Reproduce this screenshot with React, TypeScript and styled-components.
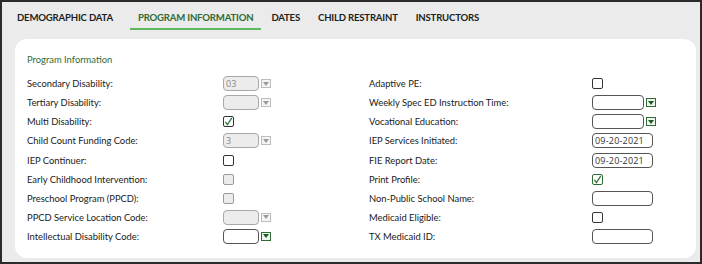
import styled, { createGlobalStyle, css } from 'styled-components'

const GlobalStyle = createGlobalStyle`
    body {
        margin: 0;
        font-family: 'Lato', 'Open Sans', sans-serif;
    }
`

const Frame = styled.div`
    width: 702px;
    height: 264px;
    box-sizing: border-box;
    border: 2px solid #2b2b2b;
    background: #ebebeb;
    display: flex;
    flex-direction: column;
`

const TabBar = styled.div`
    display: flex;
    align-items: center;
    gap: 18px;
    height: 32px;
    padding-left: 15px;
`

const Tab = styled.div<{ $active?: boolean }>`
    position: relative;
    font-size: 9.6px;
    letter-spacing: -0.2px;
    line-height: 14px;
    font-weight: 700;
    color: ${(p) => (p.$active ? '#2f6b35' : '#1e1e1e')};
    ${(p) =>
        p.$active &&
        css`
            margin-left: 7px;
            &::after {
                content: '';
                position: absolute;
                left: -8px;
                right: -8px;
                bottom: -5px;
                height: 2px;
                background: #5cb85c;
            }
        `}
`

const Card = styled.div`
    flex: 1;
    margin: 6px 4px 4px 13px;
    background: #fff;
    border-radius: 12px;
    padding: 14px 12px 12px;
`

const Heading = styled.div`
    font-size: 9.4px;
    line-height: 14px;
    color: #2f6b35;
    margin-bottom: 7px;
`

const Columns = styled.div`
    display: grid;
    grid-template-columns: 342px 1fr;
`

const Column = styled.div`
    display: flex;
    flex-direction: column;
`

const Row = styled.div<{ $labelWidth: number }>`
    display: grid;
    grid-template-columns: ${(p) => p.$labelWidth}px auto;
    align-items: center;
    height: 19.1px;
`

const Label = styled.div`
    font-size: 9.4px;
    color: #1a1a1a;
`

const Control = styled.div`
    display: flex;
    align-items: center;
    gap: 2px;
`

const Box = styled.div<{ $width: number; $disabled?: boolean }>`
    width: ${(p) => p.$width}px;
    height: 15px;
    box-sizing: border-box;
    border: 1px solid ${(p) => (p.$disabled ? '#a8a8a8' : '#555')};
    border-radius: 4px;
    background: ${(p) => (p.$disabled ? '#ececec' : '#fff')};
    font-family: 'Open Sans', sans-serif;
    font-size: 9px;
    line-height: 13px;
    padding-left: 2px;
    color: ${(p) => (p.$disabled ? '#8a8a8a' : '#333')};
    letter-spacing: 0.2px;
    white-space: nowrap;
    overflow: hidden;
`

const Arrow = styled.div<{ $disabled?: boolean }>`
    width: 10px;
    height: 9px;
    box-sizing: border-box;
    border: 1px solid ${(p) => (p.$disabled ? '#bdbdbd' : '#2f6b35')};
    background: ${(p) => (p.$disabled ? '#f4f4f4' : '#eef5ee')};
    display: flex;
    align-items: center;
    justify-content: center;
    &::before {
        content: '';
        border-left: 3px solid transparent;
        border-right: 3px solid transparent;
        border-top: 4px solid ${(p) => (p.$disabled ? '#9a9a9a' : '#1f5a24')};
    }
`

const Check = styled.div<{ $disabled?: boolean; $green?: boolean }>`
    width: 11px;
    height: 11px;
    box-sizing: border-box;
    border: 1px solid
        ${(p) => (p.$green ? '#2f6b35' : p.$disabled ? '#9a9a9a' : '#333')};
    border-radius: 2px;
    background: ${(p) => (p.$disabled ? '#ececec' : '#fff')};
    display: flex;
    align-items: center;
    justify-content: center;
`

type Field =
    | { kind: 'select'; value?: string; disabled?: boolean }
    | { kind: 'check'; checked?: boolean; disabled?: boolean; green?: boolean }
    | { kind: 'text'; value?: string }

type Item = { label: string; field: Field }

const left: Item[] = [
    { label: 'Secondary Disability:', field: { kind: 'select', value: '03', disabled: true } },
    { label: 'Tertiary Disability:', field: { kind: 'select', disabled: true } },
    { label: 'Multi Disability:', field: { kind: 'check', checked: true } },
    { label: 'Child Count Funding Code:', field: { kind: 'select', value: '3', disabled: true } },
    { label: 'IEP Continuer:', field: { kind: 'check' } },
    { label: 'Early Childhood Intervention:', field: { kind: 'check', disabled: true } },
    { label: 'Preschool Program (PPCD):', field: { kind: 'check', disabled: true } },
    { label: 'PPCD Service Location Code:', field: { kind: 'select', disabled: true } },
    { label: 'Intellectual Disability Code:', field: { kind: 'select' } },
]

const right: Item[] = [
    { label: 'Adaptive PE:', field: { kind: 'check' } },
    { label: 'Weekly Spec ED Instruction Time:', field: { kind: 'select' } },
    { label: 'Vocational Education:', field: { kind: 'select' } },
    { label: 'IEP Services Initiated:', field: { kind: 'text', value: '09-20-2021' } },
    { label: 'FIE Report Date:', field: { kind: 'text', value: '09-20-2021' } },
    { label: 'Print Profile:', field: { kind: 'check', checked: true, green: true } },
    { label: 'Non-Public School Name:', field: { kind: 'text' } },
    { label: 'Medicaid Eligible:', field: { kind: 'check' } },
    { label: 'TX Medicaid ID:', field: { kind: 'text' } },
]

function Tick() {
    return (
        <svg width="9" height="9" viewBox="0 0 9 9">
            <path d="M1.4 4.8 L3.5 7.6 L7.8 0.8" fill="none" stroke="#2f7a35" strokeWidth="1.3" />
        </svg>
    )
}

function FieldControl({ field, selectWidth }: { field: Field; selectWidth: number }) {
    if (field.kind === 'check') {
        return (
            <Control>
                <Check $disabled={field.disabled} $green={field.green}>
                    {field.checked && <Tick />}
                </Check>
            </Control>
        )
    }
    if (field.kind === 'text') {
        return (
            <Control>
                <Box $width={61}>{field.value}</Box>
            </Control>
        )
    }
    return (
        <Control>
            <Box $width={selectWidth} $disabled={field.disabled}>
                {field.value}
            </Box>
            <Arrow $disabled={field.disabled} />
        </Control>
    )
}

function App() {
    return (
        <Frame>
            <GlobalStyle />
            <TabBar>
                <Tab>DEMOGRAPHIC DATA</Tab>
                <Tab $active>PROGRAM INFORMATION</Tab>
                <Tab>DATES</Tab>
                <Tab>CHILD RESTRAINT</Tab>
                <Tab>INSTRUCTORS</Tab>
            </TabBar>
            <Card>
                <Heading>Program Information</Heading>
                <Columns>
                    <Column>
                        {left.map((item) => (
                            <Row key={item.label} $labelWidth={196}>
                                <Label>{item.label}</Label>
                                <FieldControl field={item.field} selectWidth={36} />
                            </Row>
                        ))}
                    </Column>
                    <Column>
                        {right.map((item) => (
                            <Row key={item.label} $labelWidth={223}>
                                <Label>{item.label}</Label>
                                <FieldControl field={item.field} selectWidth={52} />
                            </Row>
                        ))}
                    </Column>
                </Columns>
            </Card>
        </Frame>
    )
}

export default App
